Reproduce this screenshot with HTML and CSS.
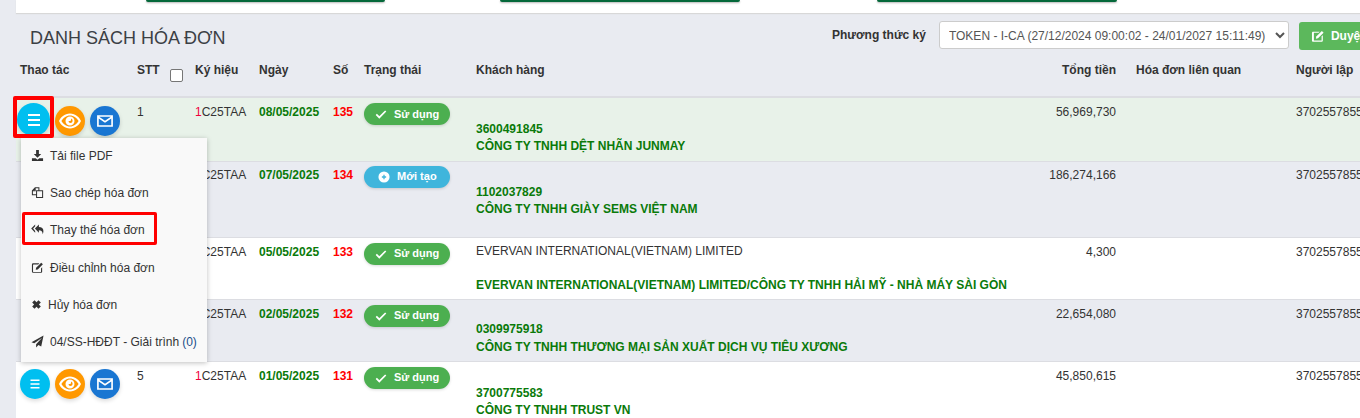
FILE: index.html
```html
<!DOCTYPE html>
<html lang="vi">
<head>
<meta charset="utf-8">
<title>Danh sách hóa đơn</title>
<link rel="stylesheet" href="styles.css">
</head>
<body>
<div class="page">
  <div class="top-card">
    <span class="top-btn top-a"></span>
    <span class="top-btn top-b"></span>
    <span class="top-btn top-c"></span>
  </div>
  <div class="toolbar">
    <h2 class="title">DANH SÁCH HÓA ĐƠN</h2>
    <div class="sign">
      <label class="sign-label">Phương thức ký</label>
      <select class="sign-select"><option>TOKEN - I-CA (27/12/2024 09:00:02 - 24/01/2027 15:11:49)</option></select>
      <button class="approve"><svg class="approve-ico" viewBox="0 0 16 16"><path d="M2.500 3h7.500L8.600 4.400H3.300v8.800h8.800V8.400l1.400-1.400v6.200c0 .8-.6 1.400-1.400 1.400H2.500c-.8 0-1.400-.6-1.400-1.400V4.400C1.100 3.600 1.700 3 2.500 3z"/><path d="M6 8.600 12.400 2.200l2 2L8 10.600l-2.400.4z"/></svg>Duyệt</button>
    </div>
  </div>
  <table class="grid">
    <colgroup>
      <col class="c-act"><col class="c-stt"><col class="c-sym"><col class="c-date"><col class="c-no"><col class="c-status"><col class="c-cust"><col class="c-total"><col class="c-rel"><col class="c-user">
    </colgroup>
    <thead>
      <tr>
        <th>Thao tác</th>
        <th class="stt-head">STT<span class="check"></span></th>
        <th>Ký hiệu</th><th>Ngày</th><th>Số</th><th>Trạng thái</th><th>Khách hàng</th>
        <th class="num">Tổng tiền</th><th class="rel">Hóa đơn liên quan</th><th>Người lập</th>
      </tr>
    </thead>
    <tbody>
      <tr class="r1">
        <td class="acts"><span class="b b-menu b-big"><svg viewBox="0 0 16 16"><path d="M2 2h12v2H2zM2 7h12v2H2zM2 12h12v2H2z"/></svg></span><span class="b b-eye"><svg viewBox="0 0 24 24"><path d="M12 4.500C6.500 4.500 2.500 8.500 1 12c1.500 3.500 5.500 7.500 11 7.500s9.500-4 11-7.500c-1.500-3.500-5.500-7.500-11-7.500zm0 13c-3.800 0-7-2.600-8.600-5.500C5 9.100 8.200 6.500 12 6.500s7 2.600 8.600 5.500c-1.600 2.900-4.800 5.500-8.600 5.500z"/><path d="M12 7.500a4.500 4.500 0 1 0 0 9 4.500 4.500 0 0 0 0-9zm.5 6.500a2 2 0 0 1-2-2h1.500a1 1 0 0 0 1-1v-1.500a2.300 2.300 0 0 1-.5 4.500z"/></svg></span><span class="b b-mail"><svg viewBox="0 0 24 24"><path d="M2.500 5h19v14h-19zM4.500 9v8h15V9l-7.500 5zM5 7l7 4.700L19 7z" fill-rule="evenodd"/></svg></span></td>
        <td>1</td><td><span class="red">1</span>C25TAA</td><td class="date">08/05/2025</td><td class="no">135</td>
        <td><span class="pill ok"><svg viewBox="0 0 14 14"><path d="M1.500 7.500 5 11l7.500-7.500" /></svg>Sử dụng</span></td>
        <td class="cust"><div class="cust-note"></div><div class="tax">3600491845</div><div class="name">CÔNG TY TNHH DỆT NHÃN JUNMAY</div></td>
        <td class="num">56,969,730</td><td></td><td>3702557855</td>
      </tr>
      <tr class="r2">
        <td class="acts"></td>
        <td>2</td><td><span class="red">1</span>C25TAA</td><td class="date">07/05/2025</td><td class="no">134</td>
        <td><span class="pill new"><svg viewBox="0 0 14 14"><circle cx="7" cy="7" r="6.500" class="pill-disc"/><path d="M7 4.500v5M4.500 7h5" class="pill-plus"/></svg>Mới tạo</span></td>
        <td class="cust"><div class="cust-note"></div><div class="tax">1102037829</div><div class="name">CÔNG TY TNHH GIÀY SEMS VIỆT NAM</div></td>
        <td class="num">186,274,166</td><td></td><td>3702557855</td>
      </tr>
      <tr class="r3">
        <td class="acts"></td>
        <td>3</td><td><span class="red">1</span>C25TAA</td><td class="date">05/05/2025</td><td class="no">133</td>
        <td><span class="pill ok"><svg viewBox="0 0 14 14"><path d="M1.500 7.500 5 11l7.500-7.500" /></svg>Sử dụng</span></td>
        <td class="cust"><div class="cust-note">EVERVAN INTERNATIONAL(VIETNAM) LIMITED</div><div class="tax"></div><div class="name">EVERVAN INTERNATIONAL(VIETNAM) LIMITED/CÔNG TY TNHH HẢI MỸ - NHÀ MÁY SÀI GÒN</div></td>
        <td class="num">4,300</td><td></td><td>3702557855</td>
      </tr>
      <tr class="r4">
        <td class="acts"></td>
        <td>4</td><td><span class="red">1</span>C25TAA</td><td class="date">02/05/2025</td><td class="no">132</td>
        <td><span class="pill ok"><svg viewBox="0 0 14 14"><path d="M1.500 7.500 5 11l7.500-7.500" /></svg>Sử dụng</span></td>
        <td class="cust"><div class="cust-note"></div><div class="tax">0309975918</div><div class="name">CÔNG TY TNHH THƯƠNG MẠI SẢN XUẤT DỊCH VỤ TIÊU XƯƠNG</div></td>
        <td class="num">22,654,080</td><td></td><td>3702557855</td>
      </tr>
      <tr class="r5">
        <td class="acts"><span class="b b-menu"><svg viewBox="0 0 16 16"><path d="M2 2h12v2H2zM2 7h12v2H2zM2 12h12v2H2z"/></svg></span><span class="b b-eye"><svg viewBox="0 0 24 24"><path d="M12 4.500C6.500 4.500 2.500 8.500 1 12c1.500 3.500 5.500 7.500 11 7.500s9.500-4 11-7.500c-1.500-3.500-5.500-7.500-11-7.500zm0 13c-3.800 0-7-2.600-8.600-5.500C5 9.100 8.200 6.500 12 6.500s7 2.600 8.600 5.500c-1.600 2.900-4.800 5.500-8.600 5.500z"/><path d="M12 7.500a4.500 4.500 0 1 0 0 9 4.500 4.500 0 0 0 0-9zm.5 6.500a2 2 0 0 1-2-2h1.500a1 1 0 0 0 1-1v-1.500a2.300 2.300 0 0 1-.5 4.500z"/></svg></span><span class="b b-mail"><svg viewBox="0 0 24 24"><path d="M2.500 5h19v14h-19zM4.500 9v8h15V9l-7.500 5zM5 7l7 4.700L19 7z" fill-rule="evenodd"/></svg></span></td>
        <td>5</td><td><span class="red">1</span>C25TAA</td><td class="date">01/05/2025</td><td class="no">131</td>
        <td><span class="pill ok"><svg viewBox="0 0 14 14"><path d="M1.500 7.500 5 11l7.500-7.500" /></svg>Sử dụng</span></td>
        <td class="cust"><div class="cust-note"></div><div class="tax">3700775583</div><div class="name">CÔNG TY TNHH TRUST VN</div></td>
        <td class="num">45,850,615</td><td></td><td>3702557855</td>
      </tr>
    </tbody>
  </table>

  <span class="mark mark-menu"></span>
  <ul class="menu">
    <li><svg viewBox="0 0 14 14"><path d="M5.500 1h3v4.500H11L7 9.500 3 5.500h2.500zM1 10h4l2 1.500L9 10h4v3H1z"/></svg>Tải file PDF</li>
    <li class="m-copy"><svg viewBox="0 0 14 14" class="outline"><path d="M6 9.500H1.500V5L4.500 2H8.500V5M4.500 2V5H1.500M6 5h6.500v7.500H6z"/></svg>Sao chép hóa đơn</li>
    <li class="m-replace"><svg viewBox="0 0 14 14"><path d="M4.500 1.500.2 6l4.300 4.500V8.500L2.300 6l2.200-2.500zM8.500 1.500 4.200 6l4.300 4.500V7.800c2.300 0 3.800 1 4.200 4.200C14.500 7 12.500 4.300 8.500 4.300z"/></svg>Thay thế hóa đơn</li>
    <li class="m-edit"><svg viewBox="0 0 14 14"><path d="M2.500 2.500H9L7.800 3.700H2.800a.6.6 0 0 0-.6.600v6.900c0 .3.300.6.600.6h7.400c.3 0 .6-.3.600-.6V8l1.200-1.200v4.800c0 .6-.6 1.100-1.200 1.100H2.500c-.8 0-1.500-.6-1.500-1.400V3.900c0-.8.700-1.400 1.500-1.400z"/><path d="M5.500 7.300 11 1.800l1.800 1.800-5.500 5.500-2.200.4z"/></svg>Điều chỉnh hóa đơn</li>
    <li class="m-cancel"><svg viewBox="0 0 14 14"><path d="M4.500 1.500 7 4l2.500-2.500 3 3L10 7l2.500 2.500-3 3L7 10l-2.500 2.500-3-3L4 7 1.500 4.500z"/></svg>Hủy hóa đơn</li>
    <li class="m-send"><svg viewBox="0 0 14 14"><path d="M13.500.5 11 12.500 8 10.700 5.500 13.500V10L12 3 3.500 9 .5 7.700z"/></svg>04/SS-HĐĐT - Giải trình <span class="count">(0)</span></li>
  </ul>
</div>
</body>
</html>
```
FILE: styles.css
```css
* { box-sizing: border-box; }
html, body { margin: 0; height: 100%; overflow: hidden; }
body { background: #e9ebf1; font-family: "Liberation Sans", Arial, sans-serif; font-size: 12px; color: #333; }
.page { position: relative; width: 1360px; height: 418px; overflow: hidden; padding-left: 16px; }

.top-card { height: 13px; background: #fff; box-shadow: 0 1px 1px #d8d8d8; display: flex; position: relative; }
.top-btn { height: 2px; background: #04683a; border-radius: 0 0 3px 3px; box-shadow: 0 1px 2px rgba(0,0,0,.3); }
.top-a { margin-left: 130px; width: 239px; }
.top-b { margin-left: 115px; width: 240px; }
.top-c { margin-left: 137px; width: 240px; }

.toolbar { display: flex; justify-content: space-between; height: 49px; padding: 8px 0 0 14px; }
.title { margin: 7px 0 0; font-size: 18px; font-weight: 400; line-height: 20px; color: #3b4045; }
.sign { display: flex; align-items: flex-start; width: 528px; flex: none; }
.sign-label { font-weight: 700; font-size: 12px; margin: 7px 13px 0 0; line-height: 15px; white-space: nowrap; color: #333; }
.sign-select { width: 350px; height: 28px; font: 12px "Liberation Sans", Arial, sans-serif; color: #555; background: #fff; border: 1px solid #ccc; border-radius: 3px; padding: 1px 4px 0 5px; flex: none; }
.approve { margin: 1px 0 0 10px; flex: none; width: 89px; height: 28px; background: #5cb85c; color: #fff; border: 0; border-radius: 3px 0 0 3px; font: 12px "Liberation Sans", Arial, sans-serif; font-weight: 700; text-align: left; padding: 0 0 0 12px; display: flex; align-items: center; }
.approve-ico { width: 14px; height: 14px; fill: #fff; margin-right: 6px; flex: none; }

.grid { border-collapse: collapse; table-layout: fixed; width: 1354px; }
.c-act { width: 117px; } .c-stt { width: 58px; } .c-sym { width: 64px; } .c-date { width: 74px; }
.c-no { width: 31px; } .c-status { width: 112px; } .c-cust { width: 520px; } .c-total { width: 124px; }
.c-rel { width: 176px; } .c-user { width: 78px; }
.grid th { text-align: left; font-size: 12px; font-weight: 700; color: #333; padding: 1px 0 0 4px; height: 35px; vertical-align: top; line-height: 14px; white-space: nowrap; border-bottom: 2px solid #dcdde2; position: relative; }
.grid th.num { text-align: right; padding-right: 0; }
.grid th.rel { padding-left: 20px; }
.stt-head .check { position: absolute; left: 37px; top: 7px; width: 13px; height: 13px; background: #fff; border: 1px solid #767676; border-radius: 2px; }
.grid td { vertical-align: top; padding: 7px 0 0 4px; font-size: 12px; line-height: 15px; color: #333; white-space: nowrap; }
.grid td.num { text-align: right; padding-right: 0; }
.grid td.acts { padding: 0; }
.grid tr { border-bottom: 1px solid #dcdde2; }
.r1 { height: 64px; background: #e8f2e9; }
.r2 { height: 76px; background: #e9ebf1; }
.r3 { height: 62px; background: #fff; }
.r4 { height: 62px; background: #e9ebf1; }
.r5 { height: 62px; background: #fff; }
.grid .r2 td { padding-top: 6px; }
.red { color: #f0003c; }
.grid td.date { font-weight: 700; color: #0a7a0a; }
.grid td.no { font-weight: 700; color: #f00; }
.grid td.cust { padding-top: 6px; }
.grid .r2 td.cust { padding-top: 5px; }
.grid .r4 td.cust { padding-top: 4px; }
.grid .r2 td.acts { padding: 0; }
.cust-note { height: 17px; line-height: 15px; }
.tax { height: 17px; margin-top: 1px; line-height: 15px; font-weight: 700; color: #0a7a0a; }
.name { height: 17px; line-height: 15px; font-weight: 700; color: #0a7a0a; }
.r3 .name { margin-top: -1px; }
.r4 .name { margin-top: 1px; }

.pill { display: inline-flex; align-items: center; width: 86px; height: 22px; border-radius: 11px; color: #fff; font-size: 11px; font-weight: 700; padding-left: 11px; box-shadow: 0 1px 3px rgba(0,0,0,.15); margin-top: -2px; }
.pill svg { width: 12px; height: 12px; margin-right: 7px; fill: none; stroke: #fff; stroke-width: 2; }
.pill.ok { background: #4caf50; }
.pill.new { background: #3fb5dc; padding-left: 14px; }
.pill.new svg { margin-right: 7px; }
.pill-disc { fill: #fff; stroke: none; }
.pill-plus { stroke: #3fb5dc; stroke-width: 1.500; }

.acts { position: relative; }
.b { position: absolute; width: 30px; height: 30px; border-radius: 50%; display: flex; align-items: center; justify-content: center; top: 7px; box-shadow: 0 2px 4px rgba(0,0,0,.15); }
.r1 .b { top: 8px; }
.b-menu { left: 4px; background: #00bff0; }
.b-menu svg { width: 12px; height: 12px; fill: #fff; }
.r1 .b-big { left: 1px; top: 5px; width: 33px; height: 33px; }
.b-big svg { width: 16px; height: 16px; }
.b-eye { left: 39px; background: #ff9800; }
.b-eye svg { width: 24px; height: 24px; fill: #fff; }
.b-mail { left: 74px; background: #1976d2; }
.b-mail svg { width: 20px; height: 20px; fill: #fff; }

.mark-menu { position: absolute; left: 13px; top: 96px; width: 41px; height: 42px; border: 4px solid #f00; border-radius: 2px; z-index: 3; }
.menu { position: absolute; z-index: 2; left: 21px; top: 138px; width: 186px; height: 224px; margin: 0; padding: 0; list-style: none; background: #f9f9f9; box-shadow: 0 1px 5px rgba(0,0,0,.25); }
.menu li { display: flex; align-items: center; height: 37px; padding-left: 10px; font-size: 12px; color: #333; white-space: nowrap; }
.menu li:first-child { margin-top: -1px; }
.menu li.m-edit { margin-top: 1px; }
.menu li svg { width: 13px; height: 13px; fill: #333; margin-right: 6px; flex: none; }
.menu li .outline { fill: none; stroke: #333; stroke-width: 1.100; }
.menu .m-replace { position: relative; }
.menu .m-replace::after { content: ""; position: absolute; left: 1px; top: 1px; width: 129px; height: 27px; border: 3px solid #f00; border-radius: 2px; }
.menu li.m-cancel svg { margin-right: 6px; width: 11px; height: 11px; }
.count { color: #1a4f8a; margin-left: 3px; }
```
